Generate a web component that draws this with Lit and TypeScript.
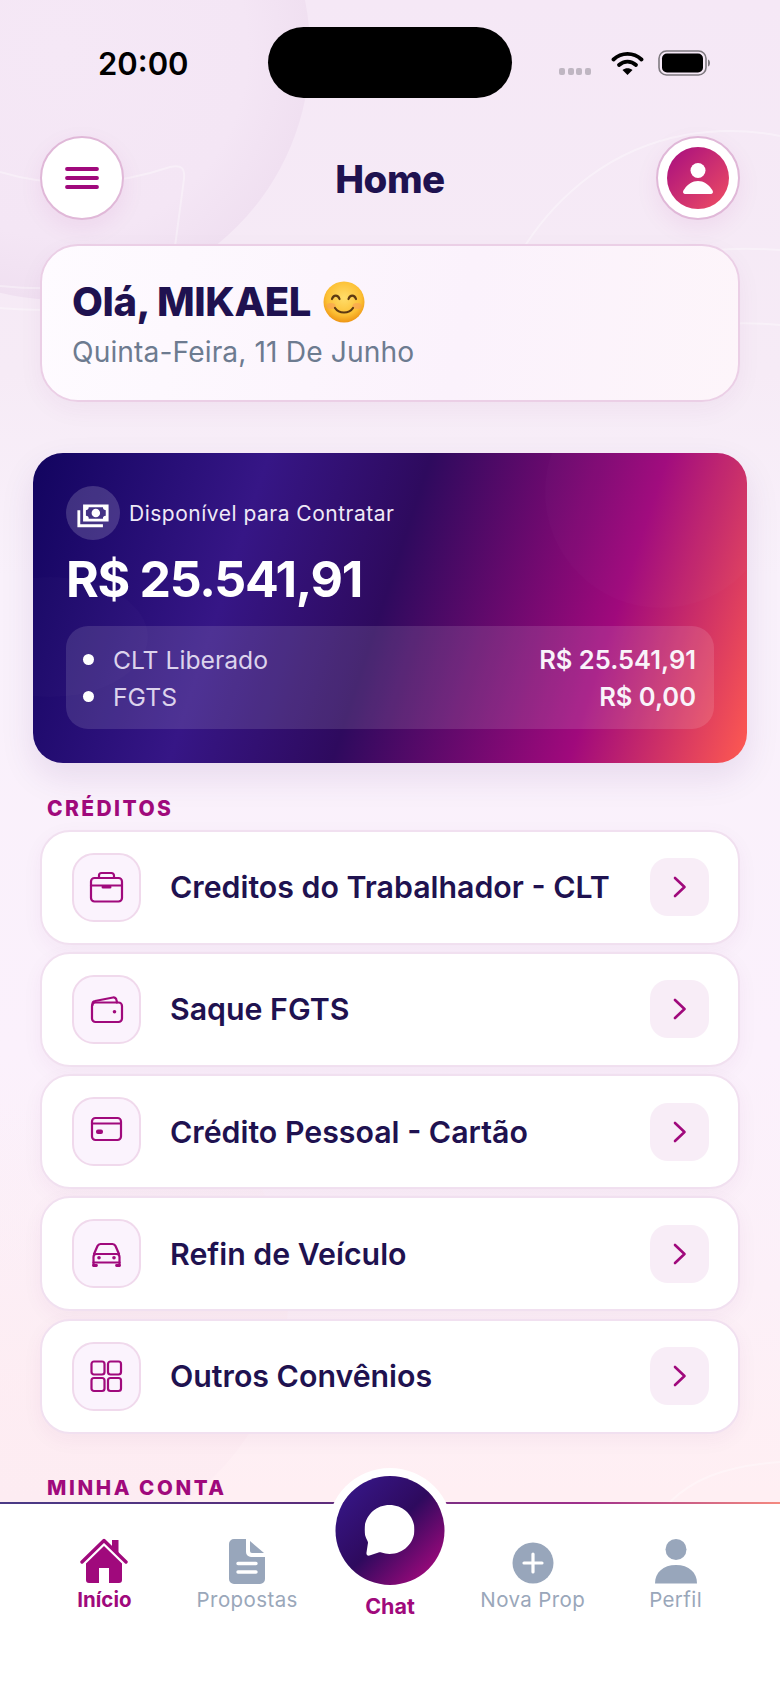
import { LitElement, html, css, svg } from 'lit';
import { customElement } from 'lit/decorators.js';

const chevron = html`<svg width="22" height="22" viewBox="0 0 22 22" fill="none" stroke="#a0097c" stroke-width="2.600" stroke-linecap="round" stroke-linejoin="round"><path d="M6 2l9.500 9-9.500 9" /></svg>`;

const rowIcons = {
  briefcase: svg`<rect x="3" y="9" width="31" height="23.500" rx="3.500" /><path d="M11 9V6.500A2.500 2.500 0 0 1 13.500 4h10A2.500 2.500 0 0 1 26 6.500V9" /><path d="M3 16.500h31" /><path d="M15 18h7" stroke-width="3" />`,
  wallet: svg`<rect x="4" y="11.500" width="30" height="19.500" rx="3.500" /><path d="M4.500 14v-1a3 3 0 0 1 2.500-3l18-3.500a3 3 0 0 1 3.500 2.500l.5 2.500" /><circle cx="26.500" cy="20.700" r="1.800" fill="#a0097c" stroke="none" />`,
  card: svg`<rect x="4" y="5" width="29" height="22" rx="3.500" /><path d="M4 10.500h29" /><rect x="8" y="16.500" width="7" height="4.500" rx="2" fill="#a0097c" stroke="none" />`,
  car: svg`<path d="M6 19l3.500-8a3.500 3.500 0 0 1 3-2h12a3.500 3.500 0 0 1 3 2L31 19" /><path d="M5.500 30.500V22a3 3 0 0 1 3-3h20a3 3 0 0 1 3 3v8.500" /><path d="M5.500 27.500h26" /><path d="M5.500 30.500h3M28.500 30.500h3" stroke-width="2.800" /><circle cx="11" cy="22.800" r="1.800" fill="#a0097c" stroke="none" /><circle cx="26" cy="22.800" r="1.800" fill="#a0097c" stroke="none" />`,
  grid: svg`<rect x="3.500" y="3.500" width="13" height="13" rx="2.500" /><rect x="20" y="3.500" width="13" height="13" rx="2.500" /><rect x="3.500" y="20" width="13" height="13" rx="2.500" /><rect x="20" y="20" width="13" height="13" rx="2.500" />`,
};

const credits = [
  { label: 'Creditos do Trabalhador - CLT', icon: rowIcons.briefcase },
  { label: 'Saque FGTS', icon: rowIcons.wallet },
  { label: 'Crédito Pessoal - Cartão', icon: rowIcons.card },
  { label: 'Refin de Veículo', icon: rowIcons.car },
  { label: 'Outros Convênios', icon: rowIcons.grid },
];

const navIcons = {
  home: html`<svg width="48" height="46" viewBox="0 0 48 46"><path d="M2 24L24 2.500 46 24" fill="none" stroke="#a0097c" stroke-width="3.400" stroke-linecap="round" stroke-linejoin="round" /><path d="M32 2h6.500v15L32 10.500z" fill="#a0097c" /><path d="M24 8L6 25.500V42a3 3 0 0 0 3 3h10V30h10v15h10a3 3 0 0 0 3-3V25.500z" fill="#a0097c" /></svg>`,
  doc: html`<svg width="36" height="45" viewBox="0 0 36 45"><path d="M5 0h12v13a5 5 0 0 0 5 5h14v22a5 5 0 0 1-5 5H5a5 5 0 0 1-5-5V5a5 5 0 0 1 5-5z" fill="#98a6bb" /><path d="M21 2l14 12H23a2 2 0 0 1-2-2z" fill="#98a6bb" /><path d="M9 24.500h18M9 33h18" stroke="#fff" stroke-width="3.400" stroke-linecap="round" /></svg>`,
  plus: html`<svg width="42" height="42" viewBox="0 0 42 42"><circle cx="21" cy="21" r="20.500" fill="#98a6bb" /><path d="M21 12v18M12 21h18" stroke="#fff" stroke-width="3.200" stroke-linecap="round" /></svg>`,
  person: html`<svg width="42" height="45" viewBox="0 0 42 45"><ellipse cx="21" cy="10.500" rx="10.500" ry="10.500" fill="#98a6bb" /><path d="M0 44.500c0-11 8-18.500 21-18.500s21 7.500 21 18.500z" fill="#98a6bb" /></svg>`,
};

@customElement('app-root')
export class AppRoot extends LitElement {
  static styles = css`
    :host {
      display: block;
      position: relative;
      width: 780px;
      height: 1696px;
      overflow: hidden;
      font-family: 'Inter', 'Liberation Sans', sans-serif;
      color: #1f1250;
      background: linear-gradient(180deg, #f5e8f6 0%, #f6ebf6 22%, #f9f1fb 34%, #fbf1fc 62%, #fcf0f8 76%, #ffeff3 88%);
    }

    .backdrop {
      position: absolute;
      left: 0;
      top: 0;
    }

    .content {
      position: relative;
      padding: 0 40px;
    }

    .status {
      height: 136px;
      position: relative;
    }

    .time {
      position: absolute;
      left: 58px;
      top: 45px;
      width: 90px;
      text-align: center;
      font-size: 31px;
      line-height: 38px;
      font-weight: 600;
      color: #000;
    }

    .island {
      position: absolute;
      left: 228px;
      top: 27px;
      width: 244px;
      height: 71px;
      border-radius: 36px;
      background: #000;
    }

    .signal {
      position: absolute;
      left: 519px;
      top: 68px;
      display: flex;
      gap: 2.500px;
    }

    .signal span {
      width: 6px;
      height: 7px;
      border-radius: 2px;
      background: #bfb6c2;
    }

    .wifi {
      position: absolute;
      left: 571px;
      top: 51px;
    }

    .battery {
      position: absolute;
      left: 618px;
      top: 50px;
    }

    .header {
      display: flex;
      align-items: center;
      justify-content: space-between;
      height: 84px;
    }

    .round {
      width: 84px;
      height: 84px;
      box-sizing: border-box;
      border-radius: 50%;
      background: #fff;
      border: 2px solid #e0b8d8;
      display: flex;
      align-items: center;
      justify-content: center;
      box-shadow: 0 8px 24px rgba(160, 9, 124, 0.07);
    }

    .avatar {
      width: 62px;
      height: 62px;
      border-radius: 50%;
      background: linear-gradient(135deg, #a60d80, #f04e62);
      display: flex;
      align-items: center;
      justify-content: center;
    }

    h1 {
      margin: 2px 0 0;
      font-size: 38.500px;
      line-height: 44px;
      font-weight: 800;
      letter-spacing: -0.5px;
    }

    .greeting {
      margin-top: 24px;
      height: 158px;
      box-sizing: border-box;
      padding: 32px 30px 0;
      border-radius: 38px;
      border: 2px solid #ebcfe6;
      background: linear-gradient(100deg, #fefbff, #fbf2fc 60%, #fdf5fa);
      box-shadow: 0 8px 24px rgba(120, 40, 120, 0.05);
    }

    .hello {
      display: flex;
      align-items: center;
      gap: 12px;
      font-size: 40px;
      line-height: 48px;
      font-weight: 800;
      letter-spacing: -0.4px;
    }

    .date {
      margin-top: 9px;
      font-size: 28.200px;
      line-height: 34px;
      letter-spacing: 0.1px;
      color: #6d7b90;
    }

    .balance {
      position: relative;
      overflow: hidden;
      margin: 51px -7px 0;
      height: 310px;
      box-sizing: border-box;
      padding: 33px 33px 0;
      border-radius: 30px;
      color: #fff;
      background: linear-gradient(108deg, #12045f 0%, #361686 29%, #2e0a5e 49%, #a0097c 78%, #ff5a50 100%);
      box-shadow: 0 14px 34px rgba(70, 20, 110, 0.1);
    }

    .glow {
      position: absolute;
      border-radius: 50%;
      background: rgba(255, 255, 255, 0.015);
    }

    .glow.top {
      left: 512px;
      top: -77px;
      width: 232px;
      height: 232px;
    }

    .glow.low {
      left: -80px;
      top: 124px;
      width: 195px;
      height: 120px;
    }

    .balance-label {
      position: relative;
      display: flex;
      align-items: center;
      gap: 9px;
      font-size: 21px;
      letter-spacing: 0.5px;
      color: #efe9f7;
    }

    .cash {
      width: 54px;
      height: 54px;
      border-radius: 50%;
      background: rgba(255, 255, 255, 0.17);
      display: flex;
      align-items: center;
      justify-content: center;
    }

    .amount {
      position: relative;
      margin-top: 8px;
      font-size: 50px;
      line-height: 62px;
      font-weight: 700;
      letter-spacing: -1.300px;
    }

    .panel {
      position: relative;
      margin-top: 16px;
      height: 103px;
      box-sizing: border-box;
      padding: 15px 18px 0 17px;
      border-radius: 22px;
      background: rgba(255, 255, 255, 0.12);
    }

    .panel-row {
      display: flex;
      align-items: center;
      height: 37px;
      font-size: 24.700px;
      color: #dcd3ec;
    }

    .dot {
      width: 11px;
      height: 11px;
      border-radius: 50%;
      background: #fff;
      margin-right: 19px;
    }

    .panel-row b {
      margin-left: auto;
      font-size: 25.500px;
      font-weight: 600;
      color: #f9f3fa;
    }

    h2 {
      margin: 0;
      padding-left: 7px;
      font-size: 21px;
      line-height: 24px;
      font-weight: 800;
      letter-spacing: 2.400px;
      color: #a0097c;
    }

    .credits {
      margin-top: 34px;
    }

    .list {
      display: flex;
      flex-direction: column;
      gap: 7.300px;
      margin-top: 8.500px;
    }

    .row {
      display: flex;
      align-items: center;
      height: 115px;
      box-sizing: border-box;
      padding: 0 29px 0 30px;
      border-radius: 30px;
      background: #fff;
      border: 2px solid #f1e0f0;
      box-shadow: 0 6px 20px rgba(120, 40, 120, 0.05);
    }

    .row-icon {
      width: 69px;
      height: 69px;
      box-sizing: border-box;
      border-radius: 22px;
      background: #fbf3fd;
      border: 2px solid #f0d9ec;
      display: flex;
      align-items: center;
      justify-content: center;
    }

    .row-icon svg {
      fill: none;
      stroke: #a0097c;
      stroke-width: 2.200;
      stroke-linecap: round;
      stroke-linejoin: round;
    }

    .row-label {
      flex: 1;
      margin-left: 29px;
      font-size: 30.300px;
      font-weight: 600;
    }

    .row-arrow {
      width: 59px;
      height: 58px;
      border-radius: 18px;
      background: #f8edf7;
      display: flex;
      align-items: center;
      justify-content: center;
    }

    .account {
      margin-top: 42px;
      font-size: 20.500px;
      letter-spacing: 2.600px;
    }

    nav {
      position: absolute;
      left: 0;
      right: 0;
      bottom: 0;
      height: 194px;
      background: #fff;
      display: grid;
      grid-template-columns: repeat(5, 1fr);
      padding: 0 33px;
      box-sizing: border-box;
    }

    nav::before {
      content: '';
      position: absolute;
      left: 0;
      right: 0;
      top: 0;
      height: 2px;
      background: linear-gradient(90deg, #4a3a86, #5a2d7c 40%, #a0308c 75%, #f58a80);
    }

    .tab {
      display: flex;
      flex-direction: column;
      align-items: center;
      justify-content: flex-end;
      height: 111px;
      font-size: 20.500px;
      line-height: 26px;
      letter-spacing: 0.4px;
      color: #9aa7ba;
    }

    .tab svg {
      display: block;
      margin-bottom: 3px;
    }

    .tab.active {
      color: #a0097c;
      font-weight: 700;
      letter-spacing: 0;
    }

    .chat {
      position: relative;
    }

    .chat-button {
      position: absolute;
      left: 50%;
      top: -26px;
      transform: translateX(-50%);
      width: 109px;
      height: 109px;
      border-radius: 50%;
      background: linear-gradient(135deg, #361686 10%, #2e0a5e 50%, #a0097c 90%);
      box-shadow: 0 0 0 8px #fff;
      display: flex;
      align-items: center;
      justify-content: center;
    }

    .chat-label {
      position: absolute;
      left: 0;
      right: 0;
      top: 91px;
      text-align: center;
      font-size: 21.500px;
      line-height: 26px;
      font-weight: 700;
      color: #a0097c;
    }
  `;

  render() {
    return html`
      <svg class="backdrop" width="780" height="1696" viewBox="0 0 780 1696" fill="none">
        <defs>
          <radialGradient id="blob" gradientUnits="userSpaceOnUse" cx="60" cy="50" r="250">
            <stop offset="0" stop-color="#f5e8f6" />
            <stop offset="0.75" stop-color="#f4e6f5" />
            <stop offset="1" stop-color="#f0e0f1" />
          </radialGradient>
          <linearGradient id="low-blob" gradientUnits="userSpaceOnUse" x1="0" y1="1100" x2="0" y2="1500">
            <stop offset="0" stop-color="#fdecf2" stop-opacity="0" />
            <stop offset="1" stop-color="#fdecf2" />
          </linearGradient>
        </defs>
        <circle cx="60" cy="50" r="250" fill="url(#blob)" />
        <circle cx="40" cy="1300" r="248" fill="url(#low-blob)" />
        <g stroke="#fff" stroke-opacity="0.35" stroke-width="2">
          <path d="M0 172c60 18 120 12 170-5 12-3 15 2 14 12l-10 75c-2 8-6 11-14 14-50 18-100 24-160 18" />
          <path d="M780 136c-60-12-130-4-190 40-40 30-90 80-125 220" />
          <path d="M780 250c-60-4-100 0-130 30" />
          <path d="M780 325c-70-6-90 2-130 30-8 6-10 10-15 16" />
          <path d="M0 308c20 2 40 2 60 2" />
          <path d="M780 1462c-60 4-90 20-110 40" />
        </g>
      </svg>

      <div class="content">
        <div class="status">
          <div class="time">20:00</div>
          <div class="island"></div>
          <div class="signal"><span></span><span></span><span></span><span></span></div>
          <svg class="wifi" width="33" height="25" viewBox="0 0 33 25" fill="none" stroke="#000" stroke-linecap="round">
            <path d="M2.500 8.500C10.500 1 22.500 1 30.500 8.500" stroke-width="3.800" />
            <path d="M8 14c5-4.500 12-4.500 17 0" stroke-width="3.800" />
            <path d="M16.500 24l-5-5c3-2.200 7-2.200 10 0z" fill="#000" stroke="none" />
          </svg>
          <svg class="battery" width="53" height="26" viewBox="0 0 53 26">
            <rect x="1" y="1" width="47" height="24" rx="7.500" fill="none" stroke="#7f7a80" stroke-width="1.600" />
            <rect x="4" y="3.500" width="41" height="19" rx="5" fill="#000" />
            <path d="M50 9.500c1.500.5 2 2 2 3.500s-.5 3-2 3.500z" fill="#7f7a80" />
          </svg>
        </div>

        <div class="header">
          <div class="round">
            <svg width="34" height="24" viewBox="0 0 34 24" stroke="#a0097c" stroke-width="3.800" stroke-linecap="round">
              <path d="M2 3h30M2 12h30M2 21h30" />
            </svg>
          </div>
          <h1>Home</h1>
          <div class="round">
            <div class="avatar">
              <svg width="30" height="31" viewBox="0 0 30 31" fill="#fff">
                <circle cx="15" cy="7.500" r="7.500" />
                <path d="M2 31c-2.500 0-2.500-3-.5-5 3-4.500 8-8 13.500-8s10.500 3.500 13.500 8c2 2 2 5-.5 5z" />
              </svg>
            </div>
          </div>
        </div>

        <div class="greeting">
          <div class="hello">
            <span>Olá, MIKAEL</span>
            <svg width="42" height="42" viewBox="0 0 42 42">
              <defs>
                <radialGradient id="face" cx="50%" cy="40%" r="60%">
                  <stop offset="0" stop-color="#ffdd6a" />
                  <stop offset="0.7" stop-color="#fcc035" />
                  <stop offset="1" stop-color="#ee9514" />
                </radialGradient>
              </defs>
              <circle cx="21" cy="21" r="20.500" fill="url(#face)" />
              <ellipse cx="8" cy="25" rx="4.500" ry="3" fill="#f79a5a" opacity="0.55" />
              <ellipse cx="34" cy="25" rx="4.500" ry="3" fill="#f79a5a" opacity="0.55" />
              <path d="M9 18c1.500-4.500 6-4.500 7.500 0M25.500 18c1.500-4.500 6-4.500 7.500 0" fill="none" stroke="#5e3a12" stroke-width="2.200" stroke-linecap="round" />
              <path d="M12 27c4 6 14 6 18 0" fill="none" stroke="#5e3a12" stroke-width="2.200" stroke-linecap="round" />
            </svg>
          </div>
          <div class="date">Quinta-Feira, 11 De Junho</div>
        </div>

        <div class="balance">
          <div class="glow top"></div>
          <div class="glow low"></div>
          <div class="balance-label">
            <div class="cash">
              <svg width="34" height="34" viewBox="0 0 24 24" fill="#fff">
                <path d="M5,6H23V18H5V6M14,9A3,3 0 0,1 17,12A3,3 0 0,1 14,15A3,3 0 0,1 11,12A3,3 0 0,1 14,9M9,8A2,2 0 0,1 7,10V14A2,2 0 0,1 9,16H19A2,2 0 0,1 21,14V10A2,2 0 0,1 19,8H9M1,10H3V20H19V22H1V10Z" />
              </svg>
            </div>
            <span>Disponível para Contratar</span>
          </div>
          <div class="amount">R$ 25.541,91</div>
          <div class="panel">
            <div class="panel-row"><span class="dot"></span>CLT Liberado<b>R$ 25.541,91</b></div>
            <div class="panel-row"><span class="dot"></span>FGTS<b>R$ 0,00</b></div>
          </div>
        </div>

        <h2 class="credits">CRÉDITOS</h2>
        <div class="list">
          ${credits.map(
            item => html`
              <div class="row">
                <div class="row-icon">
                  <svg width="37" height="37" viewBox="0 0 37 37">${item.icon}</svg>
                </div>
                <div class="row-label">${item.label}</div>
                <div class="row-arrow">${chevron}</div>
              </div>
            `,
          )}
        </div>

        <h2 class="account">MINHA CONTA</h2>
      </div>

      <nav>
        <div class="tab active">${navIcons.home}Início</div>
        <div class="tab">${navIcons.doc}Propostas</div>
        <div class="chat">
          <div class="chat-button">
            <svg width="50" height="51" viewBox="0 0 50 51" fill="#fff">
              <path d="M25 0C11 0 0 11 0 24.500c0 4.500 1 8 3 11.500.6 1 .6 2 .3 3L2 47.500c-.4 2.500 1 3.500 3 3l9-3c1-.3 2-.3 3 .1 2.500.9 5 1.400 8 1.400 14 0 25-11 25-24.500S39 0 25 0z" />
            </svg>
          </div>
          <div class="chat-label">Chat</div>
        </div>
        <div class="tab">${navIcons.plus}Nova Prop</div>
        <div class="tab">${navIcons.person}Perfil</div>
      </nav>
    `;
  }
}
